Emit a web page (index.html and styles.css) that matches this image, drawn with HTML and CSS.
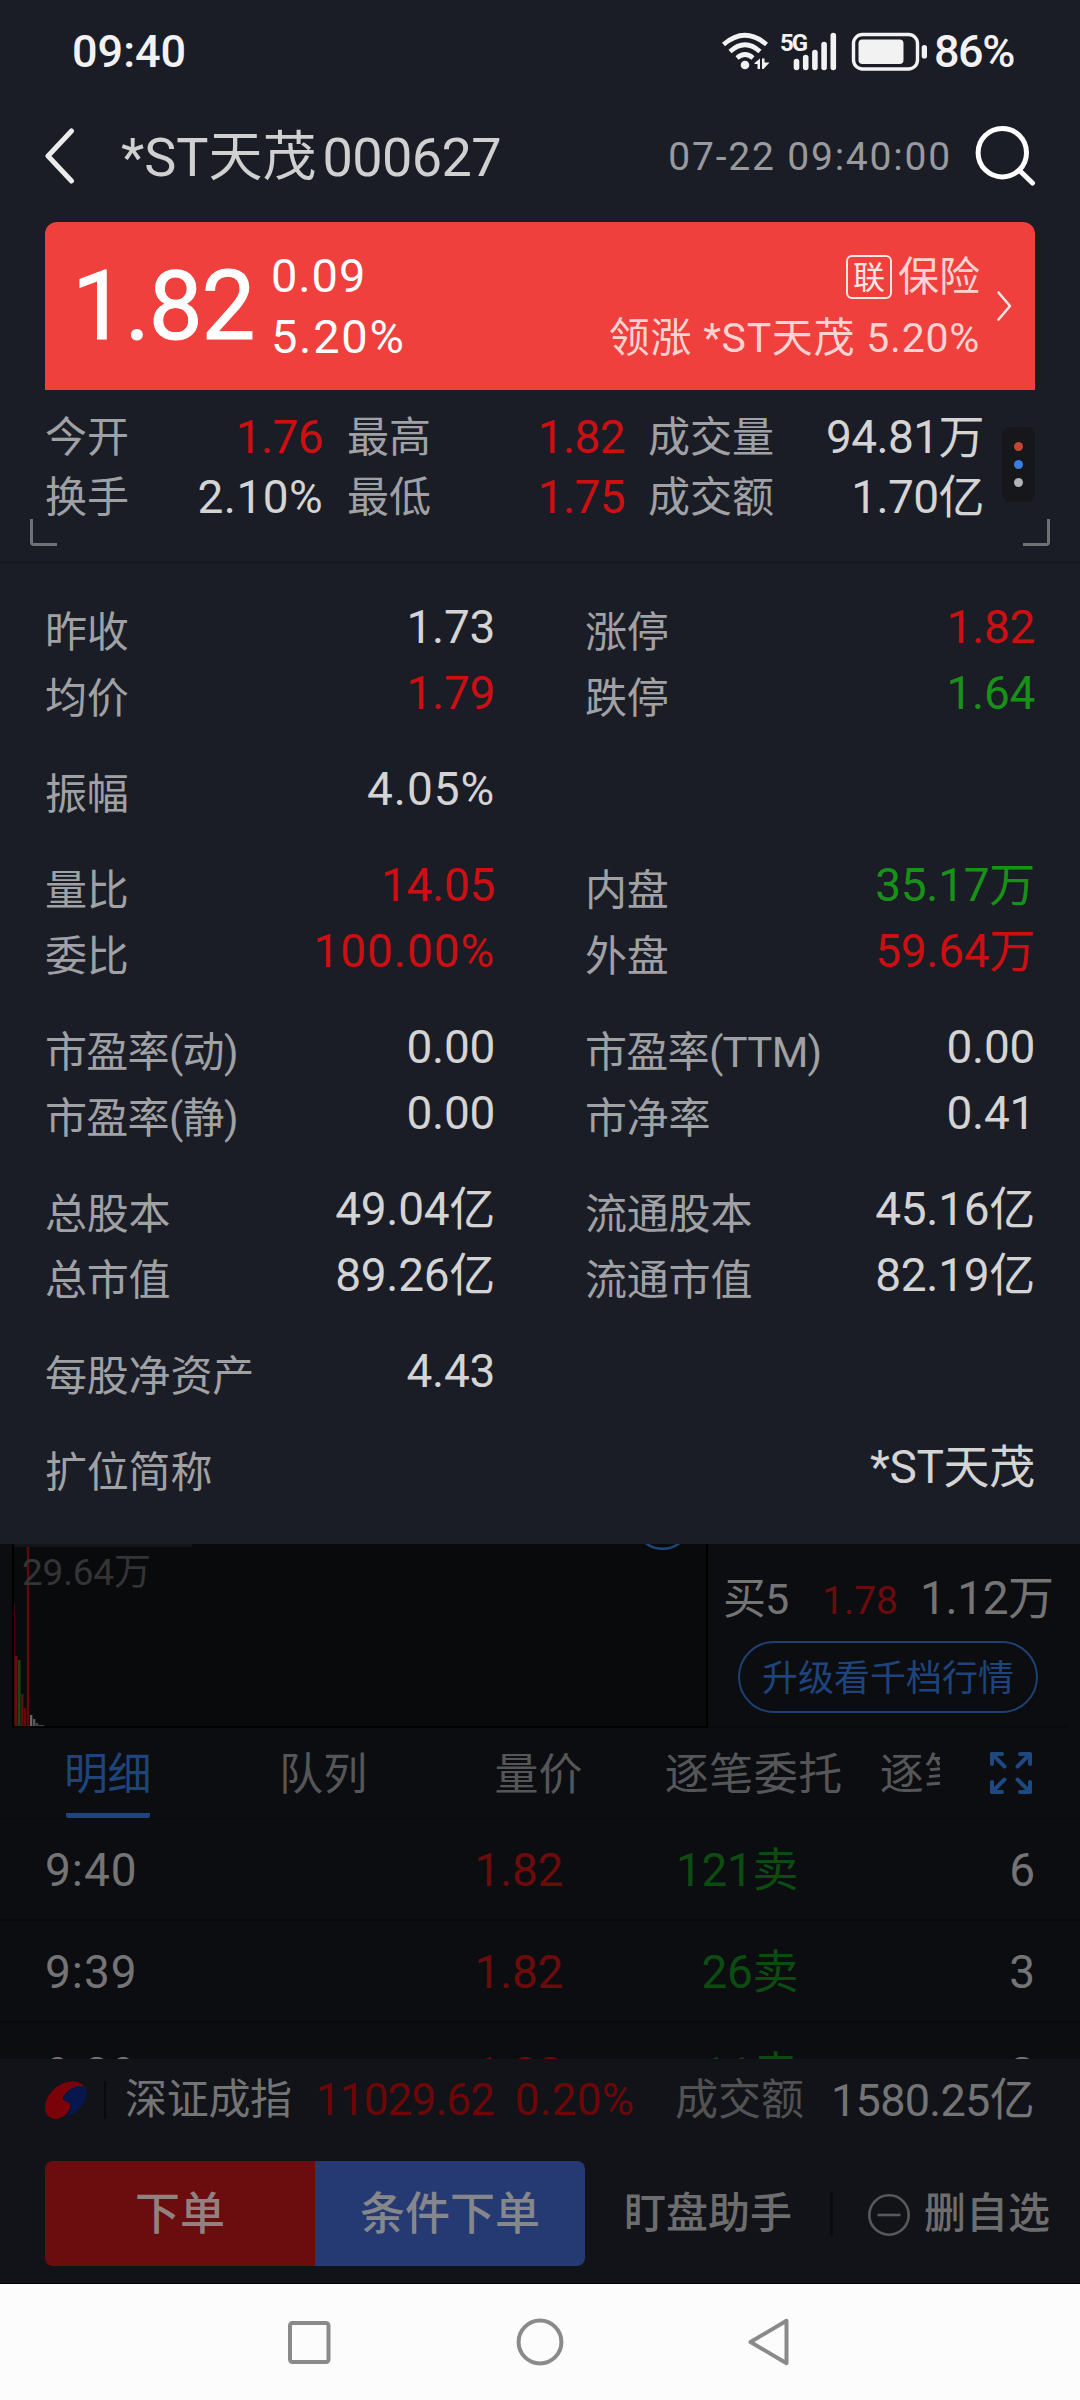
FILE: index.html
```html
<!DOCTYPE html>
<html lang="zh-CN">
<head>
<meta charset="utf-8">
<title>*ST天茂 000627</title>
<link rel="stylesheet" href="styles.css">
</head>
<body>
<div class="phone">
  <section class="panel">
    <div class="status">
      <span class="clock">09:40</span>
      <svg class="status-icons" width="210" height="40" viewBox="0 0 210 40" fill="#f2f2f2">
        <g fill="none" stroke="#f2f2f2" stroke-width="4.6">
          <path d="M3.5 13.5Q25 -5 46.500 13.500"/>
          <path d="M10 20.500Q25 7 40 20.500"/>
          <path d="M17 27Q25 20 33 27"/>
        </g>
        <circle cx="25" cy="34" r="4.300"/>
        <path d="M34.500 32L40 27.500V38H37.500V33H34.500zM42 27.500H44.500V31.500H49.500L43.500 38H42z"/>
        <g stroke="#f2f2f2" stroke-width="5.600" stroke-linecap="round">
          <path d="M76.500 30.500v6M85.700 26.500v10M94.900 21.500v15M104.100 13.500v23M113.300 4.500v32"/>
        </g>
        <rect x="133.500" y="3.500" width="64" height="34.500" rx="9" fill="none" stroke="#f2f2f2" stroke-width="3.400"/>
        <rect x="138.500" y="8.500" width="45" height="24.500" rx="4"/>
        <rect x="201.700" y="14" width="5.300" height="13.500" rx="2.600"/>
        <text x="60" y="20" class="net">5G</text>
      </svg>
      <span class="battery">86%</span>
    </div>
    <header class="header">
      <svg width="32" height="58" viewBox="0 0 32 58" fill="none" stroke="#ececec" stroke-width="5" stroke-linecap="round" stroke-linejoin="round"><path d="M28.500 4L5 29L28.500 54"/></svg>
      <h1 class="title">*ST天茂<span class="code">000627</span></h1>
      <time class="date">07-22 09:40:00</time>
      <svg class="search" width="64" height="64" viewBox="0 0 64 64" fill="none" stroke="#fff" stroke-width="5" stroke-linecap="round"><circle cx="29.300" cy="28.700" r="24.200"/><path d="M46.500 46.500L59.500 59"/></svg>
    </header>
    <div class="quote">
      <span class="price">1.82</span>
      <div class="change"><span>0.09</span><span class="pct">5.20%</span></div>
      <div class="sector">
        <span class="sector-name"><i class="tag">联</i>保险</span>
        <span class="leader">领涨 *ST天茂 5.20%</span>
      </div>
      <svg width="18" height="34" viewBox="0 0 18 34" fill="none" stroke="#ffe4e4" stroke-width="2.600" stroke-linecap="round" stroke-linejoin="round"><path d="M4.500 3.500L16 17L4.500 30.500"/></svg>
    </div>
    <div class="summary">
      <div class="stats">
        <span class="lb">今开</span><b class="up">1.76</b><span class="lb">最高</span><b class="up">1.82</b><span class="lb">成交量</span><b>94.81万</b>
        <span class="lb">换手</span><b class="pct">2.10%</b><span class="lb">最低</span><b class="up">1.75</b><span class="lb">成交额</span><b>1.70亿</b>
      </div>
      <div class="dots"><i class="dot dot-red"></i><i class="dot dot-blue"></i><i class="dot"></i></div>
      <i class="corner corner-left"></i><i class="corner corner-right"></i>
    </div>
    <div class="details">
      <div class="group">
        <p><span>昨收</span><b>1.73</b></p><p><span>涨停</span><b class="up">1.82</b></p>
        <p><span>均价</span><b class="up">1.79</b></p><p><span>跌停</span><b class="down">1.64</b></p>
      </div>
      <div class="group">
        <p><span>振幅</span><b class="pct">4.05%</b></p>
      </div>
      <div class="group">
        <p><span>量比</span><b class="up">14.05</b></p><p><span>内盘</span><b class="down">35.17万</b></p>
        <p><span>委比</span><b class="up pct">100.00%</b></p><p><span>外盘</span><b class="up">59.64万</b></p>
      </div>
      <div class="group">
        <p><span class="paren">市盈率(动)</span><b>0.00</b></p><p><span class="paren">市盈率(TTM)</span><b>0.00</b></p>
        <p><span class="paren">市盈率(静)</span><b>0.00</b></p><p><span>市净率</span><b>0.41</b></p>
      </div>
      <div class="group">
        <p><span>总股本</span><b>49.04亿</b></p><p><span>流通股本</span><b>45.16亿</b></p>
        <p><span>总市值</span><b>89.26亿</b></p><p><span>流通市值</span><b>82.19亿</b></p>
      </div>
      <div class="group">
        <p><span>每股净资产</span><b>4.43</b></p>
      </div>
      <div class="group">
        <p class="wide"><span>扩位简称</span><b>*ST天茂</b></p>
      </div>
    </div>
  </section>

  <section class="market">
    <div class="chart">
      <svg class="bars" width="692" height="182" viewBox="0 0 692 182">
        <rect width="178" height="3" fill="#141518"/>
        <rect y="60" width="1" height="122" fill="#420a0c"/>
        <rect x="1" y="112" width="2.600" height="70" fill="#6b0c0d"/>
        <rect x="4" y="116" width="2.600" height="66" fill="#1d4312"/>
        <rect x="7" y="150" width="2.600" height="32" fill="#5c0c0d"/>
        <rect x="9.600" y="164" width="2.600" height="18" fill="#7a0000"/>
        <rect x="12.800" y="3" width="2.400" height="179" fill="#5d0a0c"/>
        <rect x="16" y="171" width="2.300" height="11" fill="#69696a"/>
        <rect x="19" y="175" width="2.300" height="7" fill="#59595a"/>
        <rect x="21.800" y="179" width="2.300" height="3" fill="#49494a"/>
        <rect x="24" y="181" width="6" height="1" fill="#49494a"/>
        <circle cx="648.600" cy="-23" r="27.800" fill="none" stroke="#1f4477" stroke-width="2.400"/>
      </svg>
      <span class="volume">29.64万</span>
    </div>
    <div class="book">
      <div class="level"><span class="bid">买5</span><span class="bid-price">1.78</span><span class="bid-size">1.12万</span></div>
      <div class="upgrade">升级看千档行情</div>
    </div>
  </section>

  <nav class="tabs">
    <div class="tab-list"><span class="tab active">明细</span><span class="tab">队列</span><span class="tab">量价</span><span class="tab">逐笔委托</span><span class="tab">逐笔</span></div>
    <svg width="42" height="42" viewBox="0 0 42 42" fill="none" stroke="#1e4880" stroke-width="4" stroke-linecap="round" stroke-linejoin="round">
      <path d="M2 12V2H12M2 2L14.500 14.500M30 2H40V12M40 2L27.500 14.500M2 30V40H12M2 40L14.500 27.500M30 40H40V30M40 40L27.500 27.500"/>
    </svg>
  </nav>

  <section class="trades">
    <div class="trade"><span>9:40</span><span class="up">1.82</span><span class="down">121卖</span><span>6</span></div>
    <div class="trade"><span>9:39</span><span class="up">1.82</span><span class="down">26卖</span><span>3</span></div>
    <div class="trade"><span>9:39</span><span class="up">1.82</span><span class="down">11卖</span><span>2</span></div>
  </section>

  <footer class="bottom">
    <div class="index">
      <svg width="42" height="38" viewBox="0 0 42 38">
        <path fill="#7c0209" d="M41 8C37 1 31 0 25 .500C12 2 1 14 0 26C0 33 4 38 11 38C20 37 26 29 25 23C23 18 15 21 19 15C25 7 34 2 41 8z"/>
        <path fill="#07164c" d="M41 8C36 2 28 5 22 11C17 16 18 20 23 21C28 24 25 32 20 37C32 33 44 21 41 8z"/>
      </svg>
      <span class="index-name">深证成指</span>
      <span class="index-value">11029.62</span>
      <span class="index-change">0.20%</span>
      <span class="turnover-label">成交额</span>
      <span class="turnover">1580.25亿</span>
    </div>
    <div class="actions">
      <span class="btn btn-order">下单</span><span class="btn btn-cond">条件下单</span>
      <span class="assistant">盯盘助手</span>
      <svg class="minus" width="44" height="44" viewBox="0 0 44 44" fill="none" stroke="#59595b" stroke-width="2.600"><circle cx="22" cy="22" r="19.700"/><path d="M10.500 22h23"/></svg>
      <span class="remove">删自选</span>
    </div>
  </footer>

  <div class="sysnav">
    <svg width="50" height="50" viewBox="0 0 50 50"><rect x="6" y="6" width="38.500" height="39" rx="2.500"/></svg>
    <svg width="50" height="50" viewBox="0 0 50 50"><circle cx="25" cy="25" r="21.400"/></svg>
    <svg width="50" height="50" viewBox="0 0 50 50"><path d="M4.500 25L40.500 3.800V46.200z"/></svg>
  </div>
</div>
</body>
</html>
```
FILE: styles.css
```css
* { box-sizing: border-box; margin: 0; padding: 0; }
body { background: #0c0d11; font-family: Roboto, "Noto Sans CJK SC", sans-serif; }
i, b { font-style: normal; font-weight: 400; }
svg { display: block; flex: none; }
span, b, time, h1 { white-space: nowrap; }
.phone { width: 1080px; height: 2400px; overflow: hidden; display: flex; flex-direction: column; }
.panel { height: 1544px; flex: none; background: #1b1d26; color: #d4d4d5; }
.up { color: #cc0f12; }
.down { color: #179118; }

.status { height: 102px; padding: 0 63px 0 72px; display: flex; align-items: center; color: #f2f2f2; font-size: 45px; font-weight: 500; }
.status-icons { margin-left: auto; margin-right: 4px; }
.battery { width: 83px; letter-spacing: -1.5px; }
.net { font-size: 24px; font-weight: 700; letter-spacing: -2px; }

.header { height: 108px; padding: 0 43px 0 43px; display: flex; align-items: center; }
.title { margin: 4px 0 0 46px; font-size: 54px; font-weight: 400; line-height: 80px; color: #d0d0d1; }
.code { margin-left: 6px; letter-spacing: -.6px; }
.date { margin: 2px 0 0 auto; font-size: 39px; letter-spacing: 1.8px; color: #999a9e; }
.search { margin-left: 21px; }

.quote { margin: 12px 45px 0; height: 168px; padding: 0 23px 0 27px; display: flex; align-items: center; background: #ef403d; border-radius: 12px 12px 0 0; color: #fff; }
.price { width: 199px; font-size: 96px; letter-spacing: -1.2px; line-height: 168px; -webkit-text-stroke: 1px #fff; }
.change { display: flex; flex-direction: column; font-size: 47px; line-height: 61px; letter-spacing: .9px; }
.change .pct { letter-spacing: 1.7px; }
.sector { margin-left: auto; margin-right: 14px; padding-top: 4px; display: flex; flex-direction: column; align-items: flex-end; font-size: 41px; line-height: 61px; color: #ffd3d2; }
.sector-name { display: flex; align-items: center; }
.tag { width: 46px; height: 44px; margin: -2px 6px 0 0; border: 2px solid; border-radius: 6px; font-size: 32px; line-height: 42px; text-align: center; color: #ffe6e6; }
.leader { letter-spacing: .75px; }

.summary { position: relative; height: 171px; padding: 17px 45px 0; display: flex; }
.stats { display: grid; grid-template-columns: 84px 194px 85px 193px 127px 209px; grid-template-rows: 60px 60px; font-size: 46px; line-height: 60px; }
.stats .lb { font-size: 42px; line-height: 62px; color: #a0a1a4; }
.stats .lb:nth-of-type(3n+2) { margin-left: 24px; }
.stats .lb:nth-of-type(3n) { margin-left: 47px; }
.stats b { text-align: right; letter-spacing: -.6px; }
.stats b.pct { letter-spacing: .4px; }
.stats b:nth-of-type(3n+2) { margin-right: -24px; }
.stats b:nth-of-type(3n) { margin-right: -47px; }
.dots { width: 33px; height: 75px; margin: 20px 0 0 auto; display: flex; flex-direction: column; align-items: center; justify-content: center; gap: 9px; border-radius: 8px; background: #16171b; }
.dot { width: 9px; height: 9px; border-radius: 50%; background: #b3b3b3; }
.dot-red { background: #c24634; }
.dot-blue { background: #3b7ee0; }
.corner { position: absolute; top: 129px; width: 27px; height: 27px; border: solid #6f7175; border-width: 0 0 3px 3px; border-radius: 0 0 0 4px; }
.corner-left { left: 30px; }
.corner-right { right: 30px; border-width: 0 3px 3px 0; border-radius: 0 0 4px 0; }

.details { border-top: 3px solid #171920; padding: 30px 45px 0; display: flex; flex-direction: column; gap: 30px; }
.group { display: grid; grid-template-columns: 450px 450px; column-gap: 90px; }
.group p { height: 66px; display: flex; justify-content: space-between; }
.group .wide { grid-column: span 2; }
.group span { font-size: 42px; line-height: 77px; letter-spacing: -.2px; color: #a0a1a4; }
.group .paren { letter-spacing: -.7px; }
.group b { font-size: 46px; line-height: 66px; letter-spacing: -.3px; }
.group .pct { letter-spacing: .9px; }

.market { height: 184px; flex: none; display: flex; background: #0c0d11; }
.chart { position: relative; width: 696px; margin-left: 12px; border: solid #000; border-width: 0 2px 2px; background: #090a0c; }
.volume { position: absolute; left: 8px; top: 6px; font-size: 37px; line-height: 46px; letter-spacing: -.2px; color: #343437; }
.book { flex: 1; margin-right: 12px; padding-top: 24px; border-bottom: 2px solid #090a0c; color: #747475; }
.level { height: 60px; margin-left: 15px; display: flex; align-items: baseline; line-height: 60px; }
.bid { width: 99px; font-size: 43px; letter-spacing: -1px; }
.bid-price { width: 98px; font-size: 39px; color: #6c0b0c; }
.bid-size { font-size: 46px; letter-spacing: -.4px; }
.upgrade { width: 300px; height: 72px; margin: 13px 0 0 30px; border: 2px solid #1e4071; border-radius: 36px; text-align: center; font-size: 36px; line-height: 73px; color: #1e447b; }

.tabs { height: 91px; flex: none; padding: 0 48px 0 66px; display: flex; align-items: center; justify-content: space-between; border-bottom: 1px solid #090a0c; }
.tab-list { width: 874px; height: 90px; overflow: hidden; display: flex; font-size: 44px; line-height: 94px; color: #555657; }
.tab { flex: none; margin-right: 127px; letter-spacing: .2px; }
.tab:nth-child(3) { margin-right: 82px; }
.tab:nth-child(4) { margin-right: 37px; letter-spacing: .5px; }
.active { width: 84px; margin-right: 129px; text-indent: -2px; letter-spacing: -.6px; color: #1e447b; border-bottom: 5px solid #1e447b; border-radius: 0 0 2px 2px; }

.trades { height: 240px; flex: none; overflow: hidden; color: #747475; font-size: 46px; line-height: 102px; }
.trades .up { color: #6c0b0c; letter-spacing: -.3px; }
.trades .down { color: #0d4c11; letter-spacing: -.4px; }
.trade { height: 102px; padding: 0 45px; display: grid; grid-template-columns: 279px 239px 235px 237px; border-bottom: 2px solid #090a0c; }
.trade span:first-child { letter-spacing: 1px; }
.trade span + span { text-align: right; }

.bottom { height: 225px; flex: none; background: #121318; border-bottom: 1px solid #000; color: #747475; }
.index { height: 82px; padding: 0 46px 0 45px; display: flex; align-items: center; line-height: 83px; font-size: 45px; }
.index-name { margin-left: 17px; padding-left: 19px; border-left: 2px solid #08090b; font-size: 42px; line-height: 38px; letter-spacing: -.3px; }
.index-value { margin-left: 24px; width: 199px; font-size: 44px; letter-spacing: -.8px; color: #6c0708; }
.index-change { font-size: 44px; letter-spacing: .3px; color: #6c0708; }
.turnover-label { margin-left: auto; font-size: 43px; color: #525253; }
.turnover { margin-left: 27px; letter-spacing: -.7px; }
.actions { margin-top: 20px; height: 105px; padding-left: 45px; display: flex; align-items: center; font-weight: 500; }
.btn { width: 270px; height: 105px; text-align: center; font-size: 45px; line-height: 108px; }
.btn-order { background: #6b0d0e; color: #918181; border-radius: 8px 0 0 8px; }
.btn-cond { background: #253a73; color: #85878d; border-radius: 0 8px 8px 0; }
.assistant { margin-left: 39px; padding-right: 38px; border-right: 3px solid #0b0b0d; font-size: 42px; line-height: 44px; color: #6d6d6e; }
.minus { margin: 2px 0 0 34px; }
.remove { margin-left: 13px; font-size: 42px; line-height: 44px; color: #6d6d6e; }

.sysnav { height: 116px; flex: none; background: #fcfcfc; display: flex; justify-content: center; gap: 181px; align-items: center; }
.sysnav svg { fill: none; stroke: #8a8a8a; stroke-width: 4; stroke-linejoin: round; }
```
